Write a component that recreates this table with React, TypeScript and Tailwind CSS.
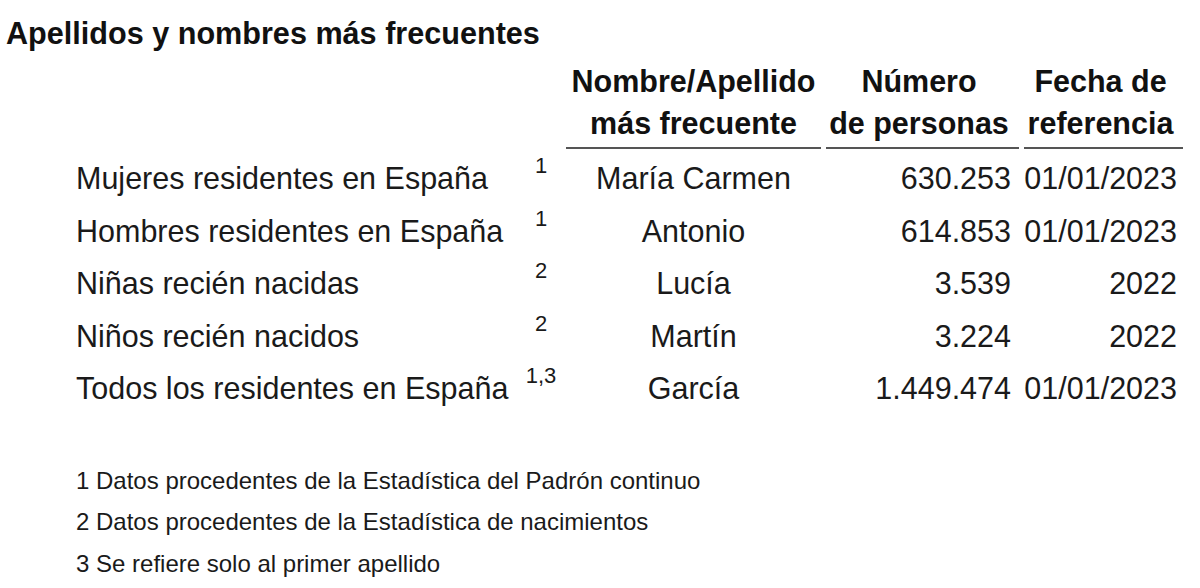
const ROWS: [string, string, string, string, string][] = [
  ["Mujeres residentes en España", "1", "María Carmen", "630.253", "01/01/2023"],
  ["Hombres residentes en España", "1", "Antonio", "614.853", "01/01/2023"],
  ["Niñas recién nacidas", "2", "Lucía", "3.539", "2022"],
  ["Niños recién nacidos", "2", "Martín", "3.224", "2022"],
  ["Todos los residentes en España", "1,3", "García", "1.449.474", "01/01/2023"],
];

const NOTES = [
  "1 Datos procedentes de la Estadística del Padrón continuo",
  "2 Datos procedentes de la Estadística de nacimientos",
  "3 Se refiere solo al primer apellido",
];

export default function App() {
  return (
    <div className="h-[588px] w-[1200px] overflow-hidden bg-white font-['Liberation_Sans',Arial,sans-serif] text-[#1a1a1a]">
      <h1 className="pl-[6px] pt-[16px] text-[30.6px] font-bold leading-[34px] text-[#111]">
        Apellidos y nombres más frecuentes
      </h1>

      <div className="mt-[10px] grid grid-cols-[440px_40px_255px_193px_159px] gap-x-[5px] pl-[76px] text-[30.5px]">
        {/* header */}
        <div />
        <div />
        <div className="border-b-2 border-[#555] pb-[3px] text-center font-bold leading-[42px] text-[#111]">
          Nombre/Apellido
          <br />
          más frecuente
        </div>
        <div className="border-b-2 border-[#555] pb-[3px] pr-[7px] text-center font-bold leading-[42px] text-[#111]">
          Número
          <br />
          de personas
        </div>
        <div className="border-b-2 border-[#555] pb-[3px] pr-[6px] text-center font-bold leading-[42px] text-[#111]">
          Fecha de
          <br />
          referencia
        </div>

        {ROWS.map(([label, note, name, count, date], i) => {
          const top = i === 0 ? "mt-[3px]" : "";
          return (
            <div key={label} className="contents">
              <div className={`whitespace-nowrap leading-[52.5px] ${top}`}>{label}</div>
              <div className={`pt-[3px] text-center text-[22px] leading-[22px] ${top}`}>{note}</div>
              <div className={`text-center leading-[52.5px] ${top}`}>{name}</div>
              <div className={`pr-[8px] text-right leading-[52.5px] ${top}`}>{count}</div>
              <div className={`pr-[6px] text-right leading-[52.5px] ${top}`}>{date}</div>
            </div>
          );
        })}
      </div>

      <div className="mt-[45px] pl-[76px] text-[24px] leading-[41.5px]">
        {NOTES.map((n) => (
          <p key={n}>{n}</p>
        ))}
      </div>
    </div>
  );
}
